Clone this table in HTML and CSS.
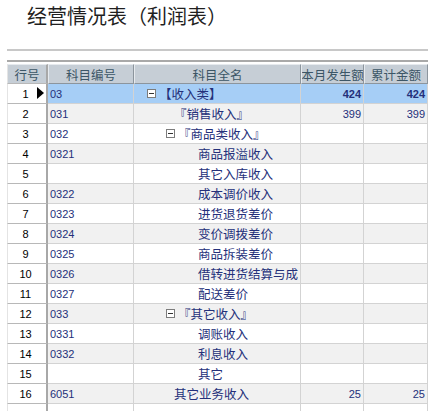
FILE: index.html
```html
<!DOCTYPE html>
<html lang="zh">
<head>
<meta charset="utf-8">
<link rel="stylesheet" href="styles.css">
</head>
<body>
<h1 class="title">经营情况表（利润表）</h1>
<div class="rule rule-a"></div>
<div class="rule rule-b"></div>
<div class="grid">
  <div class="row head">
    <div class="c rn">行号</div>
    <div class="c">科目编号</div>
    <div class="c">科目全名</div>
    <div class="c">本月发生额</div>
    <div class="c">累计金额</div>
  </div>
  <div class="row odd sel">
    <div class="c rn">1<svg class="cur" width="7" height="12" viewBox="0 0 7 12"><polygon points="0,0 7,6 0,12" fill="#000"/></svg></div>
    <div class="c code">03</div>
    <div class="c name l0"><span class="tog"></span>【收入类】</div>
    <div class="c num">424</div>
    <div class="c num">424</div>
  </div>
  <div class="row even">
    <div class="c rn">2</div>
    <div class="c code">031</div>
    <div class="c name l1leaf">『销售收入』</div>
    <div class="c num">399</div>
    <div class="c num">399</div>
  </div>
  <div class="row odd">
    <div class="c rn">3</div>
    <div class="c code">032</div>
    <div class="c name l1"><span class="tog"></span>『商品类收入』</div>
    <div class="c num"></div>
    <div class="c num"></div>
  </div>
  <div class="row even">
    <div class="c rn">4</div>
    <div class="c code">0321</div>
    <div class="c name l2">商品报溢收入</div>
    <div class="c num"></div>
    <div class="c num"></div>
  </div>
  <div class="row odd">
    <div class="c rn">5</div>
    <div class="c code"></div>
    <div class="c name l2">其它入库收入</div>
    <div class="c num"></div>
    <div class="c num"></div>
  </div>
  <div class="row even">
    <div class="c rn">6</div>
    <div class="c code">0322</div>
    <div class="c name l2">成本调价收入</div>
    <div class="c num"></div>
    <div class="c num"></div>
  </div>
  <div class="row odd">
    <div class="c rn">7</div>
    <div class="c code">0323</div>
    <div class="c name l2">进货退货差价</div>
    <div class="c num"></div>
    <div class="c num"></div>
  </div>
  <div class="row even">
    <div class="c rn">8</div>
    <div class="c code">0324</div>
    <div class="c name l2">变价调拨差价</div>
    <div class="c num"></div>
    <div class="c num"></div>
  </div>
  <div class="row odd">
    <div class="c rn">9</div>
    <div class="c code">0325</div>
    <div class="c name l2">商品拆装差价</div>
    <div class="c num"></div>
    <div class="c num"></div>
  </div>
  <div class="row even">
    <div class="c rn">10</div>
    <div class="c code">0326</div>
    <div class="c name l2">借转进货结算与成</div>
    <div class="c num"></div>
    <div class="c num"></div>
  </div>
  <div class="row odd">
    <div class="c rn">11</div>
    <div class="c code">0327</div>
    <div class="c name l2">配送差价</div>
    <div class="c num"></div>
    <div class="c num"></div>
  </div>
  <div class="row even">
    <div class="c rn">12</div>
    <div class="c code">033</div>
    <div class="c name l1"><span class="tog"></span>『其它收入』</div>
    <div class="c num"></div>
    <div class="c num"></div>
  </div>
  <div class="row odd">
    <div class="c rn">13</div>
    <div class="c code">0331</div>
    <div class="c name l2">调账收入</div>
    <div class="c num"></div>
    <div class="c num"></div>
  </div>
  <div class="row even">
    <div class="c rn">14</div>
    <div class="c code">0332</div>
    <div class="c name l2">利息收入</div>
    <div class="c num"></div>
    <div class="c num"></div>
  </div>
  <div class="row odd">
    <div class="c rn">15</div>
    <div class="c code"></div>
    <div class="c name l2">其它</div>
    <div class="c num"></div>
    <div class="c num"></div>
  </div>
  <div class="row even">
    <div class="c rn">16</div>
    <div class="c code">6051</div>
    <div class="c name l1leaf">其它业务收入</div>
    <div class="c num">25</div>
    <div class="c num">25</div>
  </div>
  <div class="row odd">
    <div class="c rn"></div>
    <div class="c code"></div>
    <div class="c name"></div>
    <div class="c num"></div>
    <div class="c num"></div>
  </div>
</div>
</body>
</html>
```
FILE: styles.css
```css
html, body {
  margin: 0;
  padding: 0;
  background: #fff;
  overflow: hidden;
}
body {
  font-family: "Noto Sans CJK SC", "Liberation Sans", sans-serif;
}
.title {
  margin: 0;
  height: 49px;
  padding: 1px 0 0 27px;
  box-sizing: border-box;
  font-size: 20px;
  font-weight: normal;
  line-height: 30px;
  color: #1f1f1f;
}
.rule {
  margin-left: 7px;
}
.rule-a {
  height: 2px;
  background: #c8c8c8;
  margin-bottom: 9px;
}
.rule-b {
  height: 2px;
  background: #a9a9a9;
  margin-bottom: 2px;
}
.grid {
  margin-left: 7px;
  display: grid;
  grid-template-columns: 41px 86px 167px 63px 64px;
  grid-auto-rows: 20px;
}
.row {
  display: contents;
}
.c {
  box-sizing: border-box;
  border-right: 1px solid #d3d3d3;
  border-bottom: 1px solid #d3d3d3;
  overflow: hidden;
  white-space: nowrap;
  display: flex;
  align-items: center;
  font-size: 12.5px;
  color: #24307a;
}
.even > .c {
  background: #f1f1f1;
}
.sel > .c {
  background: #a6cef6;
}
.head > .c {
  background: #c6ced6;
  color: #3c5666;
  justify-content: center;
  border-top: 1px solid #e6eaee;
  border-left: 1px solid #e6eaee;
  border-right: 1px solid #8c959d;
  border-bottom: 1px solid #8c959d;
  font-size: 12.5px;
}
.row > .rn {
  position: relative;
  background: #fff;
  color: #000;
  justify-content: center;
  font-family: "Liberation Sans", sans-serif;
  font-size: 11px;
  border-left: 1px solid #e4e4e4;
  border-right: 2px solid #a8a8a8;
  border-bottom: 1px solid #b8b8b8;
  padding-right: 3px;
}
.head > .rn {
  font-family: "Noto Sans CJK SC", sans-serif;
  font-size: 12.5px;
  color: #3c5666;
  background: #c6ced6;
  padding-right: 0;
}
.cur {
  position: absolute;
  right: 2px;
  top: 3px;
}
.code {
  font-family: "Liberation Sans", sans-serif;
  font-size: 11px;
  padding-left: 2px;
}
.num {
  font-family: "Liberation Sans", sans-serif;
  font-size: 11px;
  justify-content: flex-end;
  padding-right: 2px;
}
.sel > .num {
  font-weight: bold;
}
.tog {
  box-sizing: border-box;
  width: 9px;
  height: 9px;
  border: 1px solid #7c7c7c;
  background: #fff;
  position: relative;
  margin-right: 3px;
  flex: none;
}
.tog::after {
  content: "";
  position: absolute;
  left: 1px;
  right: 1px;
  top: 3px;
  height: 1px;
  background: #333;
}
.l0 { padding-left: 13px; }
.l1 { padding-left: 32px; }
.l1leaf { padding-left: 40px; }
.l2 { padding-left: 64px; }
```
